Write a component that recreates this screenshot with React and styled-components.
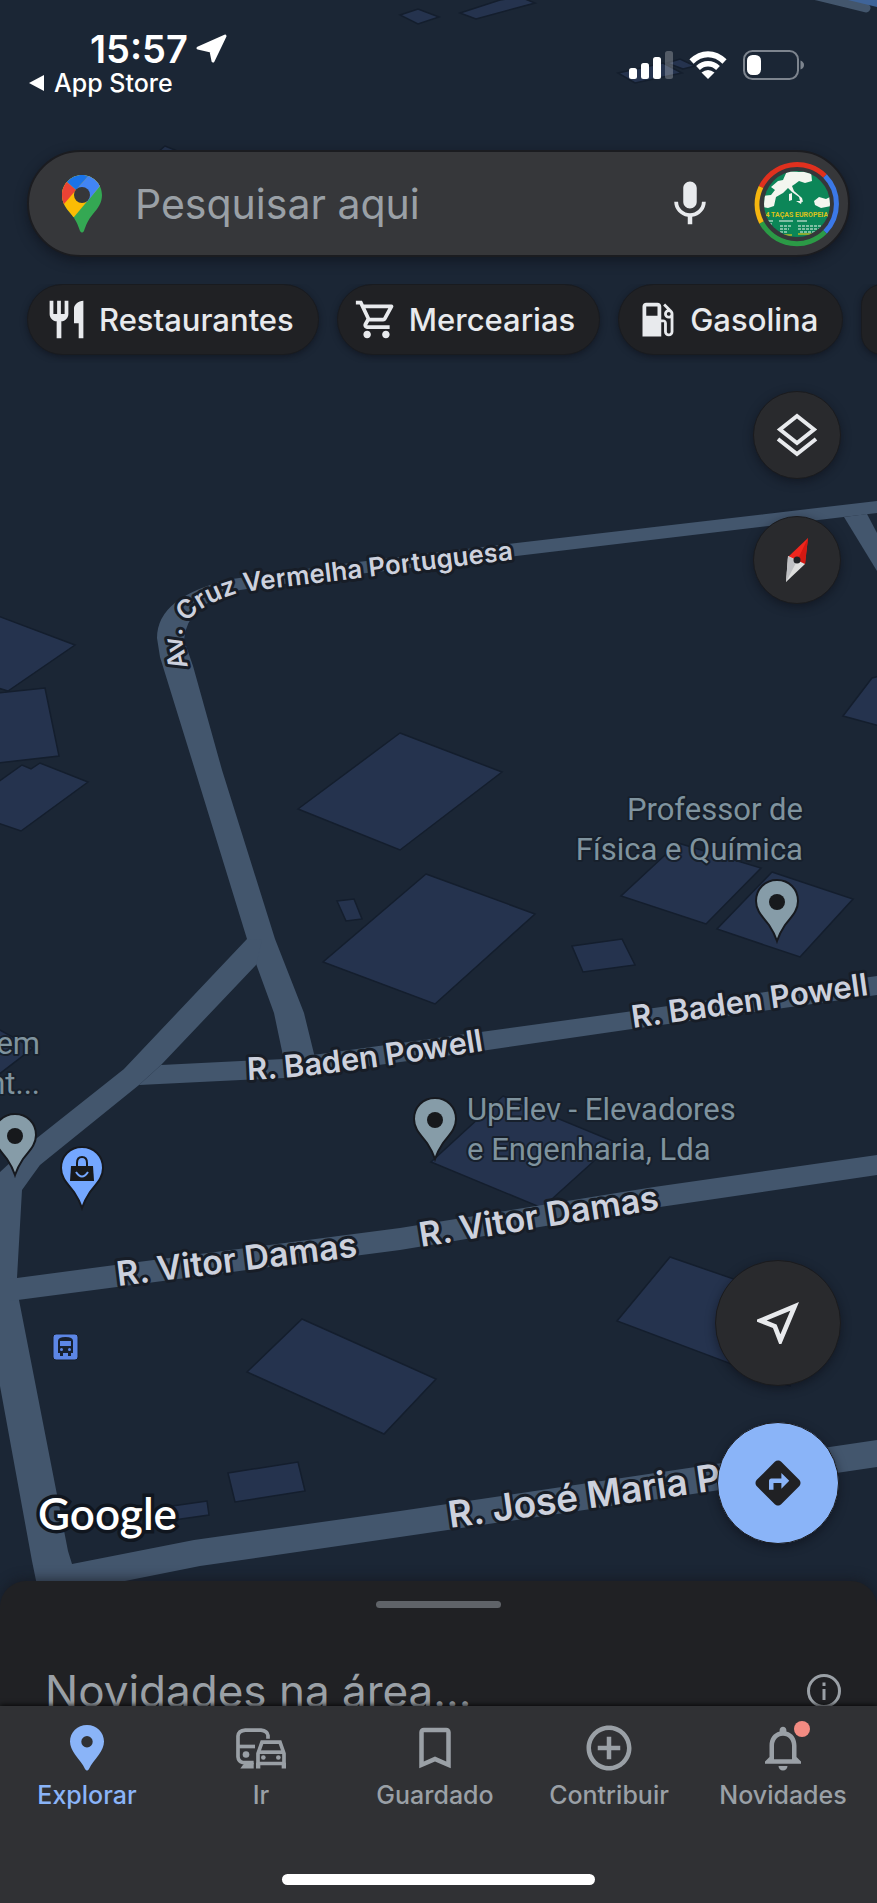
import React from 'react';
import styled, { createGlobalStyle } from 'styled-components';
import {
  MdDirections,
  MdLocalGasStation,
  MdMic,
  MdOutlineNearMe,
  MdOutlineShoppingCart,
  MdRestaurant,
  MdBookmarkBorder,
  MdAddCircleOutline,
  MdNotificationsNone,
} from 'react-icons/md';

const GlobalStyle = createGlobalStyle`
  * {
    box-sizing: border-box;
  }

  body {
    margin: 0;
    background: #1b2635;
    font-family: Inter, Roboto, sans-serif;
  }

  button {
    border: 0;
    padding: 0;
    font: inherit;
    cursor: pointer;
  }
`;

const Screen = styled.div`
  display: flex;
  flex-direction: column;
  min-height: 100vh;
  overflow: hidden;
`;

const MapSection = styled.main`
  position: relative;
  flex: 1;
  display: flex;
  flex-direction: column;
  padding-bottom: 63px;
`;

const MapCanvas = styled.svg`
  position: absolute;
  inset: 0;
  width: 100%;
  height: 100%;
  background: #1b2635;
`;

const StreetName = styled.text`
  font-family: Inter, Roboto, sans-serif;
  font-weight: 600;
  font-size: ${(props) => props.$size}px;
  fill: #cdd1dd;
  stroke: #171d27;
  stroke-width: 6px;
  stroke-linejoin: round;
  paint-order: stroke;
`;

const PlaceName = styled.text`
  font-family: Roboto, sans-serif;
  font-size: 31px;
  fill: #7f939e;
  stroke: #17202c;
  stroke-width: 4px;
  stroke-linejoin: round;
  paint-order: stroke;
`;

const StatusBar = styled.header`
  position: relative;
  display: flex;
  justify-content: space-between;
  height: 150px;
  padding: 27px 73px 0 28px;
  color: #fff;
`;

const StatusLeft = styled.div`
  display: flex;
  flex-direction: column;
`;

const Clock = styled.div`
  display: flex;
  align-items: center;
  gap: 8px;
  padding-left: 62px;
  font-size: 38px;
  font-weight: 600;
  line-height: 44px;
`;

const BackLink = styled.a`
  display: flex;
  align-items: center;
  gap: 9px;
  color: #fff;
  font-size: 25px;
  font-weight: 500;
  line-height: 24px;
  text-decoration: none;
`;

const StatusRight = styled.div`
  display: flex;
  align-items: center;
  gap: 16px;
  height: 76px;
`;

const SearchBar = styled.form`
  position: relative;
  display: flex;
  align-items: center;
  height: 107px;
  margin: 0 27px;
  padding: 0 8px 0 33px;
  border: 2px solid #1b1c20;
  border-radius: 54px;
  background: #36373a;
  box-shadow: 0 4px 12px rgba(10, 12, 20, 0.5);
`;

const SearchInput = styled.input`
  flex: 1;
  min-width: 0;
  margin-left: 32px;
  padding: 0;
  border: 0;
  outline: 0;
  background: none;
  color: #e8eaed;
  font: 400 41px Inter, Roboto, sans-serif;

  &::placeholder {
    color: #9aa0a6;
    opacity: 1;
  }
`;

const PlainButton = styled.button`
  display: flex;
  background: none;
  color: #e8eaed;
`;

const AvatarButton = styled(PlainButton)`
  margin-left: 37px;
`;

const Chips = styled.nav`
  position: relative;
  display: flex;
  gap: 18px;
  margin-top: 27px;
  padding-left: 27px;
  overflow: hidden;
  padding-bottom: 8px;
`;

const Chip = styled.button`
  flex: none;
  display: flex;
  align-items: center;
  gap: 10px;
  height: 71px;
  padding: 0 24px 0 16px;
  border: 1px solid #191b1f;
  border-radius: 36px;
  background: #202124;
  color: #e8eaed;
  font-size: 31px;
  font-weight: 500;
  box-shadow: 0 2px 6px rgba(10, 12, 20, 0.5);
`;

const MapTools = styled.div`
  position: relative;
  align-self: flex-end;
  display: flex;
  flex-direction: column;
  gap: 37px;
  margin: 28px 36px 0 0;
`;

const RoundButton = styled.button`
  display: flex;
  align-items: center;
  justify-content: center;
  width: ${(props) => props.$size}px;
  height: ${(props) => props.$size}px;
  border: 1px solid #1a1b1e;
  border-radius: 50%;
  background: ${(props) => (props.$primary ? '#8ab4f8' : '#292a2d')};
  color: ${(props) => (props.$primary ? '#202124' : '#e8eaed')};
  box-shadow: 0 3px 10px rgba(10, 12, 20, 0.5);
`;

const MapFooter = styled.div`
  position: relative;
  display: flex;
  align-items: flex-end;
  justify-content: space-between;
  margin-top: auto;
  padding: 0 36px 0 38px;
`;

const Wordmark = styled.span`
  color: #fff;
  font: 600 44px/62px Lato, sans-serif;
  -webkit-text-stroke: 7px #10161f;
  paint-order: stroke fill;
`;

const FabColumn = styled.div`
  display: flex;
  flex-direction: column;
  align-items: center;
  gap: 36px;
`;

const Sheet = styled.section`
  position: relative;
  margin-top: -26px;
  border-radius: 26px 26px 0 0;
  background: #202124;
  box-shadow: 0 -2px 12px rgba(20, 22, 28, 0.6);
`;

const Handle = styled.div`
  width: 125px;
  height: 7px;
  margin: 0 auto;
  border-radius: 4px;
  background: #5f6368;
`;

const SheetHeader = styled.div`
  display: flex;
  align-items: center;
  justify-content: space-between;
  padding: 0 36px 0 45px;
  color: #9aa0a6;
`;

const SheetTitle = styled.h2`
  margin: 0;
  font-size: 44px;
  font-weight: 400;
  line-height: 54px;
`;

const SheetBody = styled.div`
  padding-top: 20px;

  ${SheetHeader} {
    margin-top: 56px;
  }
`;

const TabBar = styled.nav`
  position: relative;
  margin-top: -12px;
  padding-bottom: 18px;
  background: #303134;
  box-shadow: 0 -1px 5px rgba(0, 0, 0, 0.8);
`;

const Tabs = styled.div`
  display: grid;
  grid-template-columns: repeat(5, 1fr);
  padding: 15px 7px 0 0;
`;

const Tab = styled.a`
  display: flex;
  flex-direction: column;
  align-items: center;
  gap: 5px;
  color: ${(props) => (props.$active ? '#8ab4f8' : '#9aa0a6')};
  font-size: 25px;
  font-weight: 500;
  line-height: 30px;
  text-decoration: none;
`;

const TabIcon = styled.span`
  position: relative;
  display: flex;
  align-items: center;
  justify-content: center;
  height: 54px;
`;

const Badge = styled.span`
  position: absolute;
  top: 0;
  right: 0;
  width: 16px;
  height: 16px;
  border-radius: 50%;
  background: #f28b82;
`;

const HomeIndicator = styled.div`
  width: 313px;
  max-width: 60%;
  height: 11px;
  margin: 64px auto 0;
  border-radius: 6px;
  background: #fff;
`;

const ROADS = [
  // Av. Cruz Vermelha Portuguesa
  'M877 501L508 544L358 562L232 579Q157 596 157 638L160 657L195 770L247 939L274 1013L286 1070L316 1062L304 1013L275 939L222 770L193 666L184 640Q186 604 240 590L358 574L508 557L877 513Z',
  'M844 517L867 514L877 533V571Z',
  // link between the two streets and down to the south road
  'M247 939L124 1069L37 1138L0 1172V1386L32 1561L40 1600H72L125 1581L200 1566L400 1537L877 1467V1440L400 1511L194 1540L72 1564L68 1551L19 1300L17 1278L22 1190L32 1176L40 1165L139 1085L161 1065L256 965L262 940Z',
  // R. Baden Powell
  'M139 1085L161 1065L284 1059L488 1031L626 1012L877 976V995L632 1029L488 1050L284 1078Z',
  // R. Vitor Damas
  'M10 1279L17 1278L115 1265L400 1228L654 1187L877 1155V1175L660 1207L400 1250L117 1287L10 1301Z',
];

const BUILDINGS = [
  '400,15 418,9 439,17 418,24',
  '460,13 500,0 520,-3 535,3 476,19',
  '618,73 663,63 682,73 635,83',
  '667,63 680,59 695,66 683,69',
  '158,152 165,146 180,152',
  '-2,616 75,645 8,691 -2,688',
  '-2,693 45,688 59,756 -2,763',
  '-2,782 22,765 31,769 40,763 88,782 21,831 -2,823',
  '400,733 502,772 400,850 298,809',
  '426,874 535,914 435,1004 323,962',
  '337,901 354,899 362,919 346,921',
  '678,843 761,868 706,924 621,896',
  '772,872 853,899 800,957 717,929',
  '572,946 622,939 635,965 583,972',
  '843,716 872,678 880,676 880,726',
  '-2,1029 33,1048 -2,1075',
  '503,1096 615,1142 542,1208 431,1162',
  '670,1257 800,1302 790,1386 617,1321',
  '302,1319 436,1379 384,1434 247,1372',
  '228,1473 298,1462 305,1491 235,1502',
  '172,1506 207,1501 209,1515 174,1520',
];

const CHIPS = [
  { label: 'Restaurantes', Icon: MdRestaurant },
  { label: 'Mercearias', Icon: MdOutlineShoppingCart },
  { label: 'Gasolina', Icon: MdLocalGasStation },
];

const MapPin = ({ x, y, color = '#869ca8', children }) => (
  <g transform={`translate(${x} ${y})`}>
    <path
      d="M0 0C-12 0-21 9-21 21C-21 31-14 37-8 45C-4 51-2 55 0 61C2 55 4 51 8 45C14 37 21 31 21 21C21 9 12 0 0 0Z"
      fill={color}
      stroke="#16191f"
      strokeWidth="2"
    />
    {children || <circle cy="22" r="8" fill="#17191c" />}
  </g>
);

const MapBackground = () => (
  <MapCanvas viewBox="0 0 877 1607" preserveAspectRatio="xMidYMin slice" aria-label="Mapa">
    <g fill="#25334e" stroke="#141e2d" strokeWidth="1.5">
      {BUILDINGS.map((points) => <polygon key={points} points={points} />)}
    </g>
    <g fill="#43566d">
      {ROADS.map((d) => <path key={d} d={d} />)}
    </g>
    <path d="M817-4L866 8" stroke="#43566d" strokeWidth="9" strokeLinecap="round" />
    <path d="M848 0H877V7Z" fill="#3f6499" />

    <path id="cruz" d="M188 667L182 640C179 620 205 602 242 592L510 560" fill="none" />
    <path id="baden" d="M248 1080Q320 1078 500 1048" fill="none" />
    <StreetName $size={26}><textPath href="#cruz">Av. Cruz Vermelha Portuguesa</textPath></StreetName>
    <StreetName $size={31}><textPath href="#baden">R. Baden Powell</textPath></StreetName>
    <StreetName $size={31} transform="translate(633 1028) rotate(-8)">R. Baden Powell</StreetName>
    <StreetName $size={34} transform="translate(118 1286) rotate(-7)">R. Vitor Damas</StreetName>
    <StreetName $size={34} transform="translate(421 1247) rotate(-9)">R. Vitor Damas</StreetName>
    <StreetName $size={37} transform="translate(450 1528) rotate(-8)">R. José Maria P</StreetName>

    <PlaceName x="803" y="820" textAnchor="end">Professor de</PlaceName>
    <PlaceName x="803" y="860" textAnchor="end">Física e Química</PlaceName>
    <PlaceName x="467" y="1120">UpElev - Elevadores</PlaceName>
    <PlaceName x="467" y="1160">e Engenharia, Lda</PlaceName>
    <PlaceName x="40" y="1054" textAnchor="end">em</PlaceName>
    <PlaceName x="40" y="1094" textAnchor="end">nt...</PlaceName>

    <MapPin x={777} y={880} />
    <MapPin x={435} y={1098} />
    <MapPin x={15} y={1114} />
    <MapPin x={82} y={1147} color="#74a7ff">
      <path d="M-11 19H11L12 34H-12Z" fill="#17191c" />
      <path d="M-5 20V16Q-5 10 0 10T5 16V20" fill="none" stroke="#17191c" strokeWidth="2" />
      <path d="M-6 25Q0 34 6 25" fill="none" stroke="#74a7ff" strokeWidth="2" />
    </MapPin>

    <g transform="translate(53 1334)">
      <rect width="25" height="26" rx="3" fill="#5c86e6" stroke="#171e2b" strokeWidth="1" />
      <path d="M5 7Q5 3 12.500 3T20 7V19H18V22H15V19H10V22H7V19H5Z" fill="#17202f" />
      <path d="M7 7H18V12H7Z" fill="#5c86e6" />
      <circle cx="8.500" cy="15.500" r="1.500" fill="#5c86e6" />
      <circle cx="16.500" cy="15.500" r="1.500" fill="#5c86e6" />
    </g>
  </MapCanvas>
);

const SignalIcon = () => (
  <svg width="44" height="28" viewBox="0 0 44 28" fill="#fff">
    <rect y="17" width="8" height="11" rx="2.500" />
    <rect x="12" y="12" width="8" height="16" rx="2.500" />
    <rect x="24" y="6" width="8" height="22" rx="2.500" />
    <rect x="36" width="8" height="28" rx="2.500" opacity=".25" />
  </svg>
);

const WifiIcon = () => (
  <svg width="38" height="28" viewBox="0 0 38 28" fill="none" stroke="#fff">
    <path d="M2.500 10.500Q10 3.200 19 3.200T35.500 10.500" strokeWidth="6" />
    <path d="M9 17Q13.500 12.800 19 12.800T29 17" strokeWidth="5.500" />
    <path d="M12.500 21.500Q19 16.500 25.500 21.500L19 28Z" fill="#fff" stroke="none" />
  </svg>
);

const BatteryIcon = () => (
  <svg width="61" height="30" viewBox="0 0 61 30">
    <rect x="1" y="1" width="54" height="28" rx="8.500" fill="none" stroke="#7d848e" strokeWidth="2" />
    <path d="M57.500 10.500Q61 12 61 15T57.500 19.500Z" fill="#7d848e" />
    <rect x="4" y="5" width="14" height="20" rx="5.500" fill="#fff" />
  </svg>
);

const MapsLogo = () => (
  <svg width="41" height="58" viewBox="0 0 41 58">
    <clipPath id="logoPin">
      <path d="M20 0C9 0 0 9 0 20C0 28 4 33 9 39C14 45 16 50 18 56Q20 59 22 56C24 50 26 45 31 39C36 33 40 28 40 20C40 9 31 0 20 0Z" />
    </clipPath>
    <g clipPath="url(#logoPin)">
      <path d="M0 0H41V58H0Z" fill="#34a853" />
      <path d="M0 0H41L38 11L12 42L0 42Z" fill="#fbbc04" />
      <path d="M14 15L27 0H41V8L38 11L25 27Z" fill="#4285f4" />
      <path d="M5 7L14 15L2 29H-2V0Z" fill="#ea4335" />
      <path d="M5 7L14 15L27 0H0Z" fill="#1a73e8" />
    </g>
    <circle cx="20" cy="20" r="8" fill="#36373a" />
  </svg>
);

const Avatar = () => (
  <svg width="86" height="86" viewBox="0 0 86 86">
    <g fill="none" strokeWidth="5">
      <path d="M7 26A40 40 0 0 1 71 15" stroke="#e0301e" />
      <path d="M71 15A40 40 0 0 1 71 71" stroke="#3b78e7" />
      <path d="M71 71A40 40 0 0 1 7.500 61.500" stroke="#2b9a46" />
      <path d="M7.500 61.500A40 40 0 0 1 7 26" stroke="#f5b50f" />
    </g>
    <clipPath id="avatarClip"><circle cx="43" cy="43" r="33" /></clipPath>
    <g clipPath="url(#avatarClip)">
      <path d="M8 8H78V78H8Z" fill="#0c8658" />
      <path
        d="M8 35L17 34L21 29L17 26L24 20L29 19L33 10L45 11L57 10L58 20L51 22L45 20L41 23L38 25L40 30L48 37L49 41L46 40L45 36L38 31L34 27L29 32L22 36L20 45L14 47L8 46Z"
        fill="#f3f6ef"
      />
      <path d="M60 40L65 36L72 38L78 35V45L67 47L61 44ZM35 33L38 32V39L35 40ZM42 40L48 40L47 43Z" fill="#f3f6ef" />
      <text
        x="43"
        y="56"
        textAnchor="middle"
        fontFamily="Roboto, sans-serif"
        fontWeight="700"
        fontSize="7"
        fill="#dcc31b"
      >
        24 TAÇAS EUROPEIAS
      </text>
      <g stroke="#c9e3d5" strokeWidth="1.500" opacity=".8">
        <path d="M13 60H19M25 60H39M43 60H53M13 63H18" />
        <path d="M26 65H37M44 65H72M26 68H35M44 68H68M26 71H33M46 71H66" strokeDasharray="3 1" />
        <path d="M26 74H38M44 73H64" stroke="#dcc31b" />
      </g>
    </g>
  </svg>
);

const LayersIcon = () => (
  <svg width="42" height="45" viewBox="0 0 42 45" fill="none" stroke="#e8eaed" strokeWidth="4">
    <path d="M21 3L38 16.500L21 30L4 16.500Z" />
    <path d="M2 26L21 41L40 26" />
  </svg>
);

const CompassIcon = () => (
  <svg width="24" height="46" viewBox="0 0 24 46" strokeLinejoin="round">
    <path d="M23 1L3 20L20 27Z" fill="#f0261d" />
    <path d="M23 1L12 24L20 27Z" fill="#d31912" />
    <path d="M3 19L1 45L20 27Z" fill="#dededd" />
    <path d="M3 19L1 45L12 24Z" fill="#bfc0c3" />
    <circle cx="12" cy="23" r="3.500" fill="#202124" />
  </svg>
);

const ExploreIcon = () => (
  <svg width="34" height="46" viewBox="0 0 34 46" fill="currentColor">
    <path
      fillRule="evenodd"
      d="M17 0C7.500 0 0 7.300 0 16.500C0 21 2 25 5 29.500C9 35 13 39 15 44Q17 47 19 44C21 39 25 35 29 29.500C32 25 34 21 34 16.500C34 7.300 26.500 0 17 0ZM17 11A5.700 5.700 0 1 1 17 22.400A5.700 5.700 0 1 1 17 11Z"
    />
  </svg>
);

const CommuteIcon = () => (
  <svg width="50" height="41" viewBox="0 0 150 122" fill="none" stroke="currentColor" strokeWidth="11">
    <path d="M96 32V22Q94 8 75 6H28Q7 8 6 24V86Q7 99 20 103H53" />
    <path d="M6 55H57" />
    <circle cx="30" cy="79" r="10" fill="currentColor" stroke="none" />
    <path d="M26 104H53V121H13Z" fill="currentColor" stroke="none" />
    <path d="M66 106V76L78 42H132L144 76V106Z" />
    <path d="M66 72H144" />
    <path d="M60 104H73V121H60ZM137 104H150V121H137Z" fill="currentColor" stroke="none" />
    <circle cx="82" cy="88" r="7" fill="currentColor" stroke="none" />
    <circle cx="127" cy="88" r="7" fill="currentColor" stroke="none" />
  </svg>
);

const InfoIcon = () => (
  <svg width="34" height="34" viewBox="0 0 34 34" fill="none" stroke="currentColor" strokeWidth="3">
    <circle cx="17" cy="17" r="15.500" />
    <path d="M17 15V26M17 8.500V12" />
  </svg>
);

const TABS = [
  { label: 'Explorar', icon: <ExploreIcon />, active: true },
  { label: 'Ir', icon: <CommuteIcon /> },
  { label: 'Guardado', icon: <MdBookmarkBorder size={54} /> },
  { label: 'Contribuir', icon: <MdAddCircleOutline size={54} /> },
  { label: 'Novidades', icon: <MdNotificationsNone size={54} />, badge: true },
];

const App = () => (
  <Screen>
    <GlobalStyle />
    <MapSection>
      <MapBackground />

      <StatusBar>
        <StatusLeft>
          <Clock>
            15:57
            <svg width="32" height="30" viewBox="0 0 32 30" fill="#fff" stroke="#fff" strokeWidth="3" strokeLinejoin="round">
              <path d="M29 2L17 27L15 17L2 14Z" />
            </svg>
          </Clock>
          <BackLink href="#app-store">
            <svg width="17" height="16" viewBox="0 0 17 16" fill="#fff"><path d="M1 8L16 0V16Z" /></svg>
            App Store
          </BackLink>
        </StatusLeft>
        <StatusRight>
          <SignalIcon />
          <WifiIcon />
          <BatteryIcon />
        </StatusRight>
      </StatusBar>

      <SearchBar role="search">
        <MapsLogo />
        <SearchInput type="text" placeholder="Pesquisar aqui" aria-label="Pesquisar aqui" />
        <PlainButton type="button" aria-label="Pesquisa por voz"><MdMic size={54} /></PlainButton>
        <AvatarButton type="button" aria-label="Conta"><Avatar /></AvatarButton>
      </SearchBar>

      <Chips aria-label="Categorias">
        {CHIPS.map(({ label, Icon }) => (
          <Chip key={label} type="button">
            <Icon size={45} />
            {label}
          </Chip>
        ))}
        <Chip type="button" aria-label="Mais categorias" />
      </Chips>

      <MapTools>
        <RoundButton $size={88} type="button" aria-label="Camadas"><LayersIcon /></RoundButton>
        <RoundButton $size={88} type="button" aria-label="Bússola"><CompassIcon /></RoundButton>
      </MapTools>

      <MapFooter>
        <Wordmark>Google</Wordmark>
        <FabColumn>
          <RoundButton $size={126} type="button" aria-label="A minha localização">
            <MdOutlineNearMe size={56} />
          </RoundButton>
          <RoundButton $size={122} $primary type="button" aria-label="Direções">
            <MdDirections size={54} />
          </RoundButton>
        </FabColumn>
      </MapFooter>
    </MapSection>

    <Sheet>
      <SheetBody>
        <Handle />
        <SheetHeader>
          <SheetTitle>Novidades na área...</SheetTitle>
          <InfoIcon />
        </SheetHeader>
      </SheetBody>
    </Sheet>

    <TabBar>
      <Tabs>
        {TABS.map(({ label, icon, active, badge }) => (
          <Tab key={label} href={`#${label.toLowerCase()}`} $active={active}>
            <TabIcon>
              {icon}
              {badge && <Badge />}
            </TabIcon>
            {label}
          </Tab>
        ))}
      </Tabs>
      <HomeIndicator />
    </TabBar>
  </Screen>
);

export default App;
